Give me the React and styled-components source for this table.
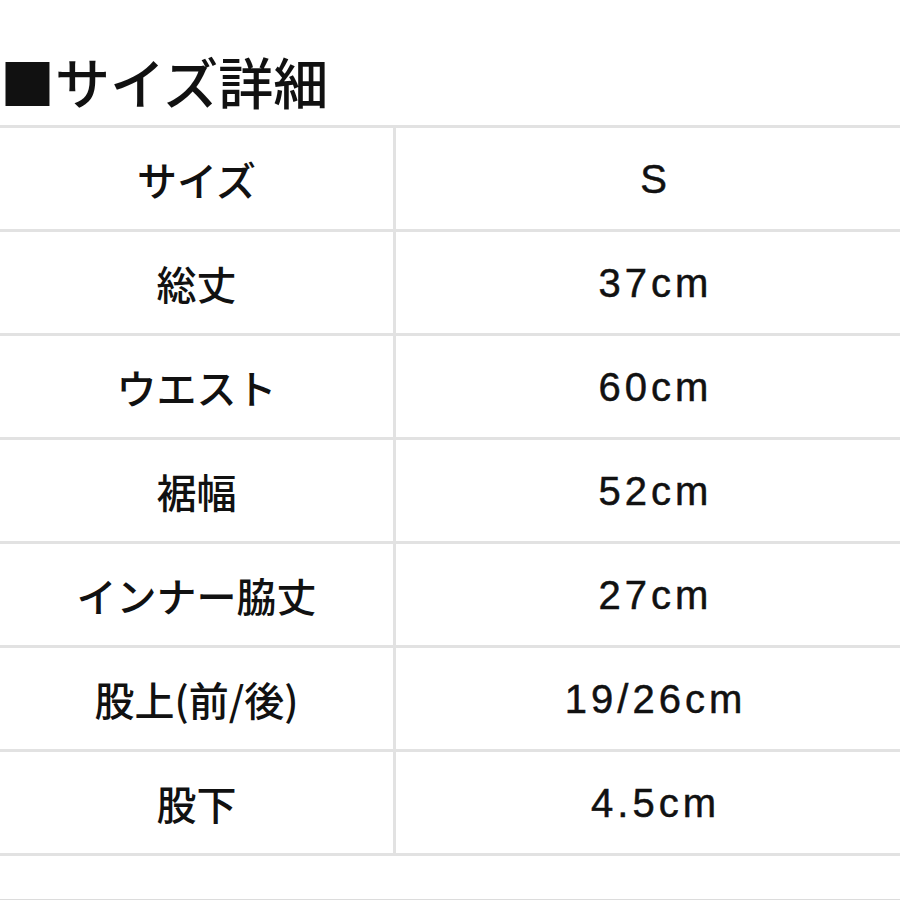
import React from 'react'
import styled, { createGlobalStyle } from 'styled-components'

const GlobalStyle = createGlobalStyle`
  html, body {
    margin: 0;
    padding: 0;
    background: #fff;
    overflow: hidden;
  }
  body {
    font-family: "Noto Sans CJK JP", "Noto Sans", sans-serif;
    color: #111;
  }
`

const Page = styled.div`
  width: 900px;
  height: 900px;
  overflow: hidden;
  padding-top: 52px;
  box-sizing: border-box;
`

const Title = styled.h2`
  margin: 0 0 17px 0;
  font-size: 55px;
  line-height: 56px;
  font-weight: 500;
`

const Table = styled.div`
  width: 915px;
  display: grid;
  grid-template-columns: 396px 1fr;
  border-top: 3px solid #e2e2e2;
`

const Cell = styled.div`
  height: 104px;
  display: flex;
  align-items: center;
  justify-content: center;
  border-bottom: 3px solid #e2e2e2;
  border-right: ${(p) => (p.$label ? '3px solid #e2e2e2' : 'none')};
  font-family: ${(p) =>
    p.$label
      ? '"Noto Sans CJK JP", sans-serif'
      : '"Liberation Sans", "Noto Sans CJK JP", sans-serif'};
  font-size: 40px;
  font-weight: ${(p) => (p.$label ? 500 : 400)};
  letter-spacing: ${(p) => (p.$label ? '0' : '4px')};
  -webkit-text-stroke: ${(p) => (p.$label ? '0' : '0.5px #111')};
  padding-top: ${(p) => (p.$label ? '0' : '1px')};
  box-sizing: border-box;
`

const Footer = styled.div`
  margin-top: 43px;
  border-top: 1px solid #dcdcdc;
`

const rows = [
  ['サイズ', 'S'],
  ['総丈', '37cm'],
  ['ウエスト', '60cm'],
  ['裾幅', '52cm'],
  ['インナー脇丈', '27cm'],
  ['股上(前/後)', '19/26cm'],
  ['股下', '4.5cm'],
]

export default function App() {
  return (
    <Page>
      <GlobalStyle />
      <Title>■サイズ詳細</Title>
      <Table>
        {rows.map(([label, value]) => (
          <React.Fragment key={label}>
            <Cell $label>{label}</Cell>
            <Cell>{value}</Cell>
          </React.Fragment>
        ))}
      </Table>
      <Footer />
    </Page>
  )
}
